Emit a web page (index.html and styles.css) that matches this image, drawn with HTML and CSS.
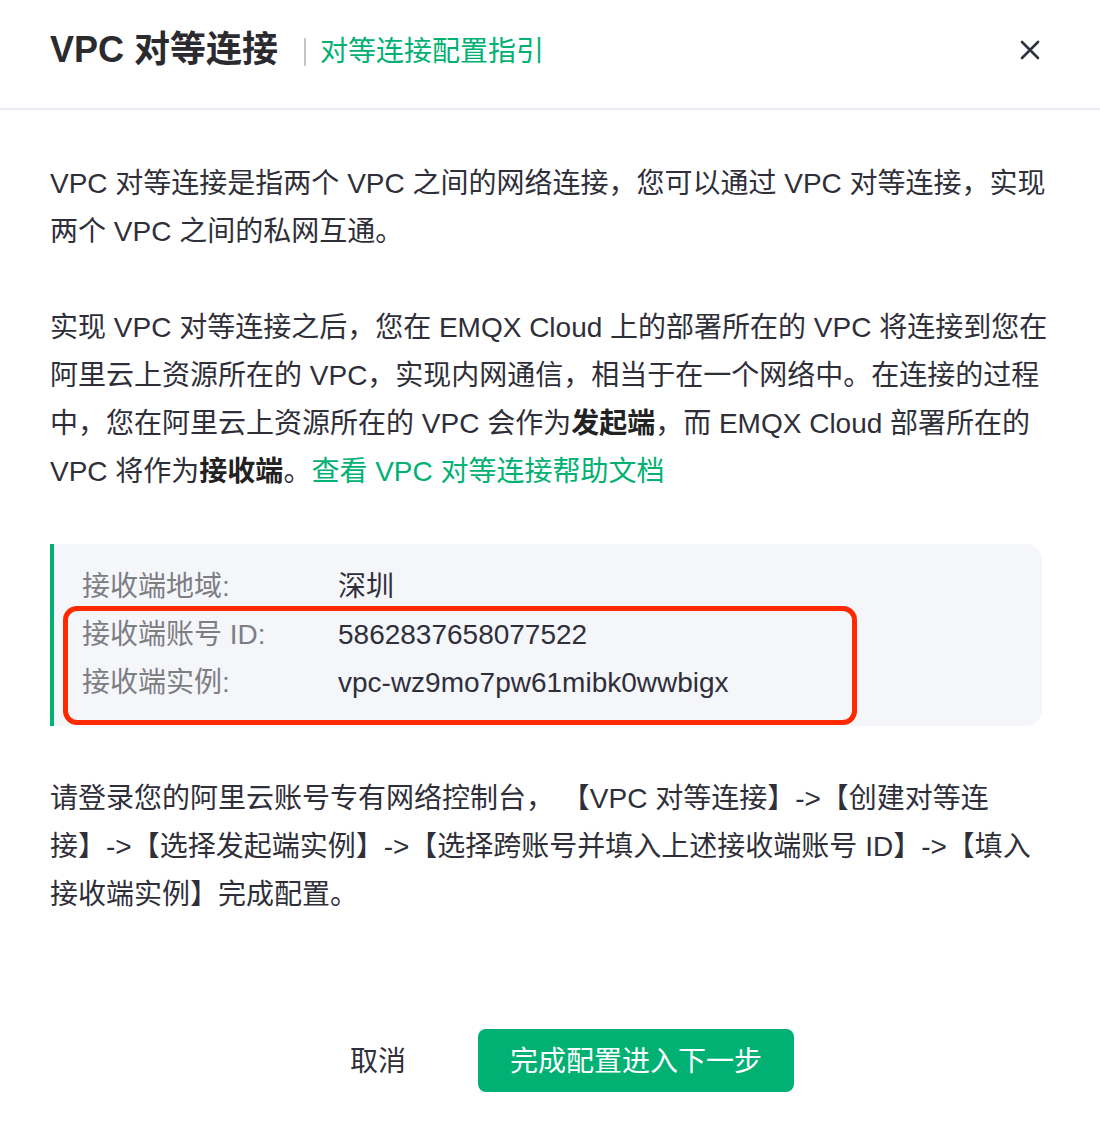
FILE: index.html
```html
<!DOCTYPE html>
<html lang="zh-CN">
<head>
    <meta charset="UTF-8">
    <meta name="viewport" content="width=device-width, initial-scale=1.0">
    <title>VPC 对等连接</title>
    <link rel="stylesheet" href="styles.css">
</head>
<body>
    <div class="dialog">
        <!-- Nagłówek -->
        <header class="dialog-header">
            <h2 class="dialog-title">VPC 对等连接</h2>
            <span class="title-divider"></span>
            <a href="#" class="title-link">对等连接配置指引</a>
            <button class="close-btn" aria-label="关闭">
                <svg width="20" height="20" viewBox="0 0 20 20">
                    <path d="M2 2 L18 18 M18 2 L2 18" stroke="#2f3340" stroke-width="2.6" stroke-linecap="round" fill="none"/>
                </svg>
            </button>
        </header>

        <main class="dialog-body">
            <p>VPC 对等连接是指两个 VPC 之间的网络连接，您可以通过 VPC 对等连接，实现两个 VPC 之间的私网互通。</p>

            <p>实现 VPC 对等连接之后，您在 EMQX Cloud 上的部署所在的 VPC 将连接到您在阿里云上资源所在的 VPC，实现内网通信，相当于在一个网络中。在连接的过程中，您在阿里云上资源所在的 VPC 会作为<strong>发起端</strong>，而 EMQX Cloud 部署所在的 VPC 将作为<strong>接收端</strong>。<a href="#" class="doc-link">查看 VPC 对等连接帮助文档</a></p>

            <div class="info-box">
                <div class="info-row">
                    <span class="info-label">接收端地域:</span>
                    <span class="info-value">深圳</span>
                </div>
                <div class="info-row">
                    <span class="info-label">接收端账号 ID:</span>
                    <span class="info-value">5862837658077522</span>
                </div>
                <div class="info-row">
                    <span class="info-label">接收端实例:</span>
                    <span class="info-value">vpc-wz9mo7pw61mibk0wwbigx</span>
                </div>
                <div class="highlight"></div>
            </div>

            <p>请登录您的阿里云账号专有网络控制台， 【VPC 对等连接】-&gt;【创建对等连<br>接】-&gt;【选择发起端实例】-&gt;【选择跨账号并填入上述接收端账号 ID】-&gt;【填入<br>接收端实例】完成配置。</p>
        </main>

        <footer class="dialog-footer">
            <button class="btn-cancel">取消</button>
            <button class="btn-primary">完成配置进入下一步</button>
        </footer>
    </div>
</body>
</html>
```

FILE: styles.css
```css
body {
    margin: 0;
    background: #fff;
    font-family: "Liberation Sans", "Noto Sans CJK SC", sans-serif;
    color: #2f2f3a;
}
.dialog {
    width: 1100px;
    height: 1146px;
    box-sizing: border-box;
}
.dialog-header {
    height: 110px;
    box-sizing: border-box;
    border-bottom: 2px solid #e9ecf3;
    display: flex;
    align-items: center;
    padding: 0 50px 8px;
}
.dialog-title {
    margin: 0;
    font-size: 36px;
    font-weight: bold;
    line-height: 44px;
    color: #2a2a2f;
}
.title-divider {
    width: 2px;
    height: 28px;
    background-color: #c4c4c8;
    margin: 4px 14px 0 26px;
}
.title-link {
    color: #00b173;
    text-decoration: none;
    font-size: 28px;
    line-height: 40px;
    margin-top: 4px;
}
.close-btn {
    margin-left: auto;
    margin-right: 10px;
    background: none;
    border: none;
    padding: 0;
    width: 20px;
    height: 20px;
    cursor: pointer;
}
.dialog-body {
    padding: 50px 50px 0;
    font-size: 28px;
    line-height: 48px;
}
.dialog-body p {
    margin: 0 0 48px;
}
.dialog-body strong {
    font-weight: bold;
    color: #222;
}
.doc-link {
    color: #00b173;
    text-decoration: none;
}
.info-box {
    position: relative;
    background-color: #f5f6fa;
    border-left: 4px solid #00b173;
    border-radius: 0 16px 16px 0;
    padding: 19px 28px;
    margin: 0 8px 49px 0;
}
.info-row {
    display: flex;
}
.info-label {
    width: 256px;
    color: #7d7d84;
}
.info-value {
    color: #2f2f3a;
}
.highlight {
    position: absolute;
    left: 9px;
    top: 62px;
    width: 794px;
    height: 119px;
    box-sizing: border-box;
    border: 5px solid #ff2a00;
    border-radius: 14px;
}
.dialog-footer {
    display: flex;
    justify-content: center;
    gap: 32px;
    margin-top: 110px;
    padding-left: 4px;
}
.btn-cancel {
    background: none;
    border: none;
    font-family: inherit;
    font-size: 28px;
    color: #2f2f3a;
    padding: 0 40px 4px;
    height: 63px;
    cursor: pointer;
}
.btn-primary {
    background-color: #00b173;
    color: #fff;
    border: none;
    border-radius: 8px;
    font-family: inherit;
    font-size: 28px;
    height: 63px;
    padding: 0 32px 4px;
    cursor: pointer;
}
.btn-primary:hover {
    background-color: #009e67;
}
```
